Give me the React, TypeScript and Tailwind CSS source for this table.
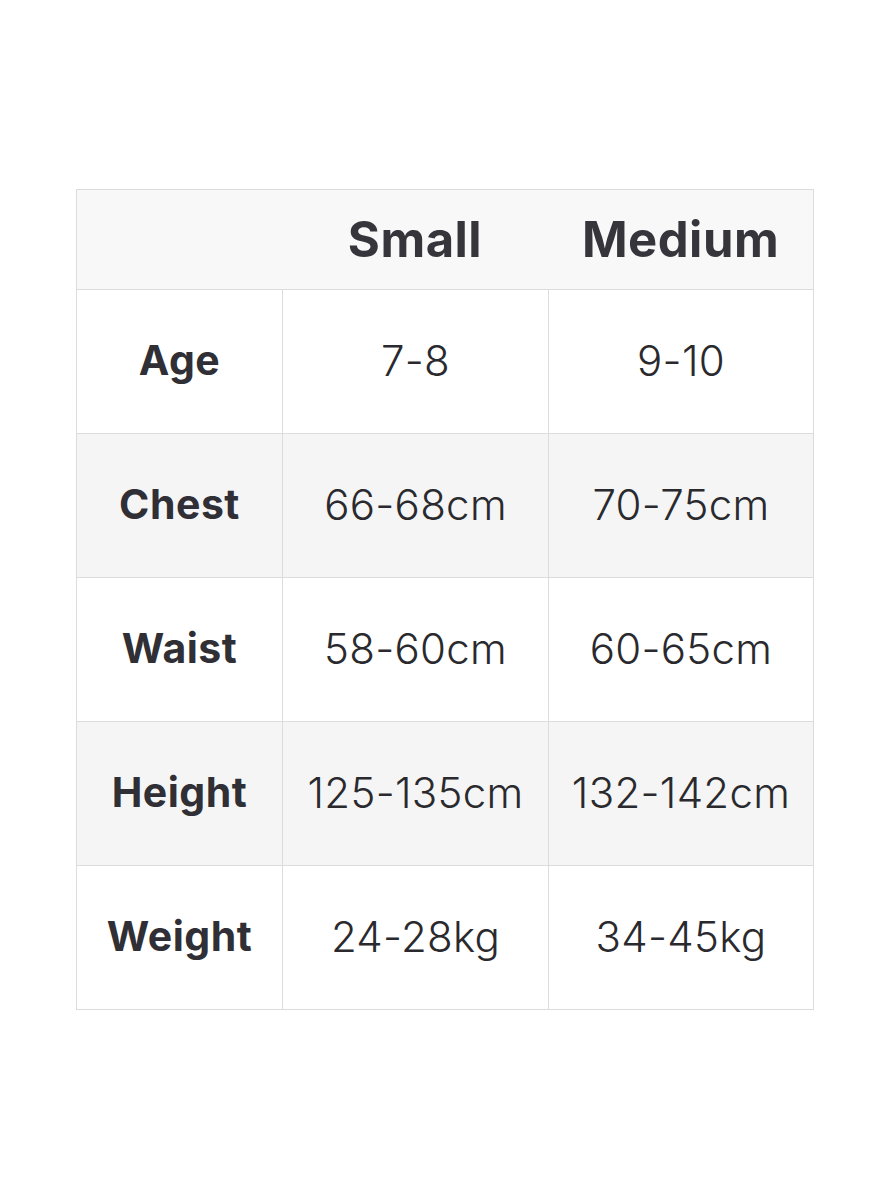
const rows = [
  { label: "Age", small: "7-8", medium: "9-10" },
  { label: "Chest", small: "66-68cm", medium: "70-75cm" },
  { label: "Waist", small: "58-60cm", medium: "60-65cm" },
  { label: "Height", small: "125-135cm", medium: "132-142cm" },
  { label: "Weight", small: "24-28kg", medium: "34-45kg" },
];

export default function App() {
  return (
    <main className="min-h-[1200px] w-[889px] bg-white pt-[189px] pl-[76px] font-['Inter',sans-serif]">
      <div className="w-[738px] border border-[#dcdcdc]">
        <div className="grid h-[99px] grid-cols-[205px_266px_1fr] items-center bg-[#f8f8f8] text-[49px] font-bold tracking-[0.5px] text-[#35353b]">
          <div />
          <div className="text-center">Small</div>
          <div className="text-center">Medium</div>
        </div>
        {rows.map((r, i) => (
          <div
            key={r.label}
            className={
              "grid h-[144px] grid-cols-[205px_266px_1fr] border-t border-[#dcdcdc] " +
              (i % 2 === 1 ? "bg-[#f5f5f5]" : "bg-white")
            }
          >
            <div className="flex items-center justify-center pb-[2px] text-[41px] font-bold tracking-[0.5px] text-[#2f2f35]">
              {r.label}
            </div>
            <div className="flex items-center justify-center border-l border-[#dcdcdc] pb-[2px] text-[42px] font-light tracking-[0.3px] text-[#2a2a2e]">
              {r.small}
            </div>
            <div className="flex items-center justify-center border-l border-[#dcdcdc] pb-[2px] text-[42px] font-light tracking-[0.3px] text-[#2a2a2e]">
              {r.medium}
            </div>
          </div>
        ))}
      </div>
    </main>
  );
}
